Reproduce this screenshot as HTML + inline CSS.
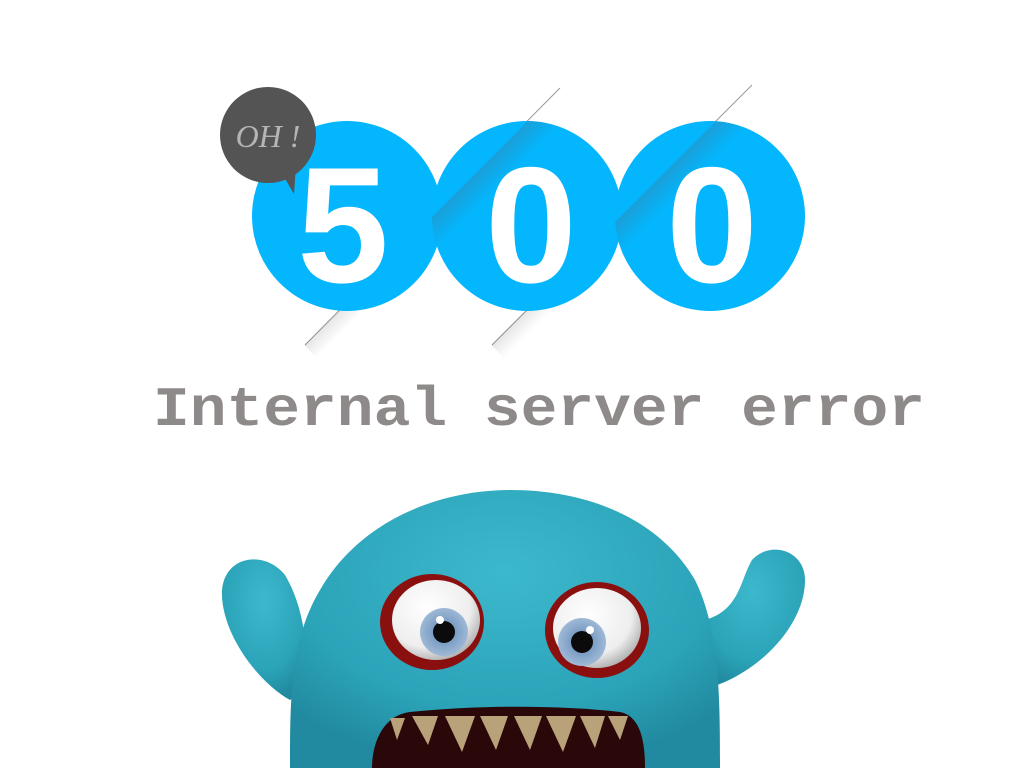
<!DOCTYPE html>
<html><head><meta charset="utf-8"><style>
html,body{margin:0;padding:0;background:#fff;width:1024px;height:768px;overflow:hidden}
</style></head><body>
<svg width="1024" height="768" viewBox="0 0 1024 768" xmlns="http://www.w3.org/2000/svg">
<defs>
<linearGradient id="sh" x1="0" y1="0" x2="0" y2="1">
<stop offset="0" stop-color="#2a8fc0" stop-opacity="0.6"/><stop offset="1" stop-color="#2a8fc0" stop-opacity="0"/>
</linearGradient>
<linearGradient id="sh2" x1="0" y1="0" x2="0" y2="1">
<stop offset="0" stop-color="#000" stop-opacity="0.10"/><stop offset="1" stop-color="#000" stop-opacity="0"/>
</linearGradient>
<clipPath id="c2"><circle cx="527" cy="216" r="95"/></clipPath>
<clipPath id="c3"><circle cx="710" cy="216" r="95"/></clipPath>
<radialGradient id="fur" cx="0.5" cy="0.3" r="0.7">
<stop offset="0" stop-color="#3cb8cc"/><stop offset="0.7" stop-color="#2ba3b8"/><stop offset="1" stop-color="#218aa0"/>
</radialGradient>
<radialGradient id="eye" cx="0.4" cy="0.35" r="0.7">
<stop offset="0" stop-color="#fff"/><stop offset="0.7" stop-color="#eee"/><stop offset="1" stop-color="#aaa"/>
</radialGradient>
<radialGradient id="iris" cx="0.5" cy="0.5" r="0.5">
<stop offset="0" stop-color="#5d86b5"/><stop offset="1" stop-color="#9fb9d6"/>
</radialGradient>
</defs>
<line x1="305" y1="345" x2="560" y2="88" stroke="#999" stroke-width="1"/>
<line x1="492" y1="345" x2="752" y2="85" stroke="#999" stroke-width="1"/>
<!-- outside soft shadow below-right of lower segments -->
<g transform="translate(340 310) rotate(-45)"><rect x="-50" y="0" width="120" height="18" fill="url(#sh2)"/></g>
<g transform="translate(527 310) rotate(-45)"><rect x="-50" y="0" width="120" height="18" fill="url(#sh2)"/></g>
<circle cx="347" cy="216" r="95" fill="#03b6fd"/>
<circle cx="527" cy="216" r="95" fill="#03b6fd"/>
<circle cx="710" cy="216" r="95" fill="#03b6fd"/>
<g clip-path="url(#c2)">
<g transform="translate(432.5 216.5) rotate(-45)">
<rect x="-200" y="0" width="400" height="26" fill="url(#sh)"/>
</g>
</g>
<g clip-path="url(#c3)">
<g transform="translate(622 215) rotate(-45)">
<rect x="-200" y="0" width="400" height="26" fill="url(#sh)"/>
</g>
</g>
<g font-family="Liberation Sans, sans-serif" font-weight="bold" font-size="165" fill="#fff" text-anchor="middle">
<text x="343" y="282">5</text>
<text x="531" y="282">0</text>
<text x="712" y="282">0</text>
</g>
<circle cx="268" cy="135" r="48" fill="#545454"/>
<path d="M280 170 L294 194 L296 165 Z" fill="#545454"/>
<text x="268" y="147" font-family="Liberation Serif, serif" font-style="italic" font-size="32" fill="#b5b5b5" text-anchor="middle">OH !</text>
<text x="153" y="425" font-family="Liberation Mono, monospace" font-weight="bold" font-size="56" fill="#8f8a8a" textLength="772" lengthAdjust="spacingAndGlyphs">Internal server error</text>
<path d="M222 590 C225 555 265 550 285 575 C300 600 310 640 305 690 L290 700 C255 680 220 630 222 590 Z" fill="url(#fur)"/>
<path d="M805 580 C805 550 770 540 752 560 C740 580 740 610 705 620 L700 690 C750 680 805 630 805 580 Z" fill="url(#fur)"/>
<path d="M290 768 C290 700 290 640 320 590 C360 520 440 490 510 490 C590 490 660 520 695 580 C720 630 720 700 720 768 Z" fill="url(#fur)"/>
<path d="M372 768 C372 740 385 715 410 712 C480 705 560 705 620 712 C640 716 645 740 645 768 Z" fill="#2a0708"/>
<g fill="#b9a27a">
<path d="M390 718 L405 718 L397 740 Z"/><path d="M412 716 L438 716 L428 745 Z"/><path d="M445 716 L475 716 L462 752 Z"/>
<path d="M480 716 L508 716 L496 750 Z"/><path d="M514 716 L542 716 L530 750 Z"/><path d="M546 716 L576 716 L563 752 Z"/>
<path d="M580 716 L605 716 L595 748 Z"/><path d="M608 716 L628 716 L620 740 Z"/>
</g>
<ellipse cx="432" cy="622" rx="52" ry="48" fill="#8a1010"/>
<ellipse cx="436" cy="620" rx="44" ry="40" fill="url(#eye)"/>
<circle cx="444" cy="632" r="24" fill="url(#iris)"/>
<circle cx="444" cy="632" r="11" fill="#0b0b0b"/>
<circle cx="440" cy="620" r="4" fill="#fff"/>
<ellipse cx="597" cy="630" rx="52" ry="48" fill="#8a1010"/>
<ellipse cx="597" cy="628" rx="44" ry="40" fill="url(#eye)"/>
<circle cx="582" cy="642" r="24" fill="url(#iris)"/>
<circle cx="582" cy="642" r="11" fill="#0b0b0b"/>
<circle cx="590" cy="630" r="4" fill="#fff"/>
</svg>
</body></html>
